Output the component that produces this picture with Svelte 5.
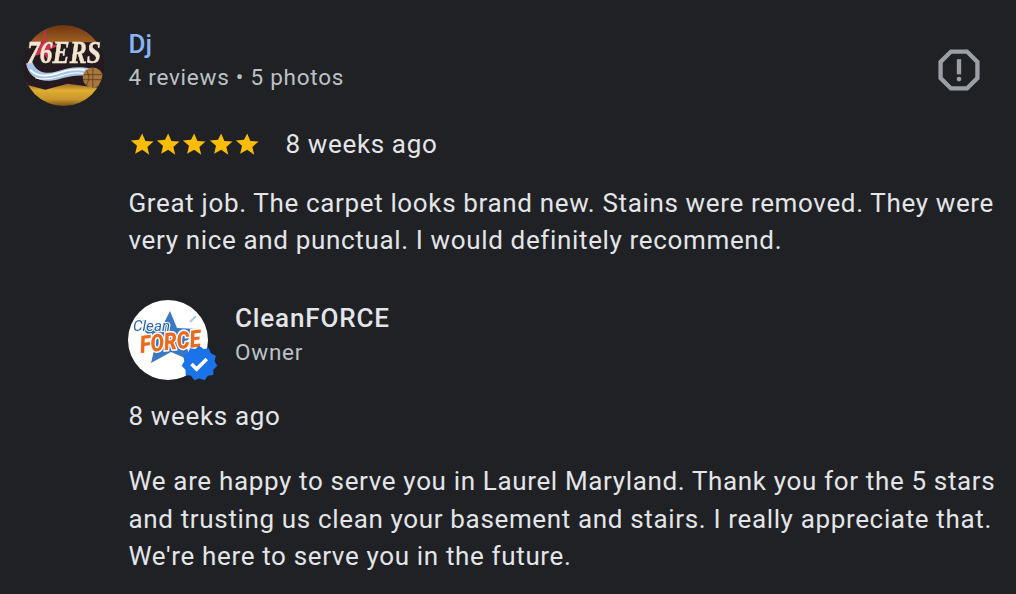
<script>
	let stars = [0, 1, 2, 3, 4];
	const starPath = "M12 2.2l2.9 6.8 7.4.6-5.6 4.9 1.7 7.2L12 17l-6.4 3.7 1.7-7.2-5.6-4.9 7.4-.6z";
</script>

<div class="review">
	<svg class="avatar" viewBox="0 0 80 80">
		<defs>
			<clipPath id="round"><circle cx="40" cy="40" r="40" /></clipPath>
			<linearGradient id="top" x1="0" y1="0" x2="0" y2="1">
				<stop offset="0" stop-color="#6e3512" />
				<stop offset="1" stop-color="#b5702a" />
			</linearGradient>
			<linearGradient id="low" x1="0" y1="0" x2="0" y2="1">
				<stop offset="0" stop-color="#6b3d1c" />
				<stop offset="0.4" stop-color="#e0ae30" />
				<stop offset="0.75" stop-color="#c8962c" />
				<stop offset="1" stop-color="#7c4f1a" />
			</linearGradient>
			<linearGradient id="orange" x1="0" y1="0" x2="0" y2="1">
				<stop offset="0" stop-color="#f2922e" />
				<stop offset="1" stop-color="#e2551c" />
			</linearGradient>
		</defs>
		<g clip-path="url(#round)">
			<rect width="80" height="24" fill="url(#top)" />
			<rect y="54" width="80" height="26" fill="url(#low)" />
			<path d="M0 17h80v33l-6 12-30-4-22 6-22-6z" fill="#241a20" />
			<path d="M3 38c2 12 12 18 24 17s24-9 44-3l-4-9c-14-3-24 0-34 3s-20 1-24-10z" fill="#a9c6e6" />
			<path d="M7 44c6 7 16 7 26 4s20-6 32-3" stroke="#fff" stroke-width="1.6" fill="none" />
			<path d="M12 52c10 3 20 0 30-3s16-2 22 0" stroke="#fff" stroke-width="1" fill="none" />
			<circle cx="69" cy="52" r="10" fill="#a8773e" />
			<path d="M60 49h18M59 54h20M69 42v20M62 44c4 5 4 11 0 16" stroke="#5c3a1a" stroke-width="0.8" fill="none" />
			<path d="M22 3l1 15 13 2-11 5 2 13-7-10-13 4 9-9-7-9 10 4z" fill="#c8324f" />
		</g>
		<text x="4" y="38" class="sixers" textLength="73" lengthAdjust="spacingAndGlyphs">76ERS</text>
	</svg>

	<div class="content">
		<div class="head">
			<div>
				<div class="name">Dj</div>
				<div class="meta">4 reviews • 5 photos</div>
			</div>
			<svg class="flag" viewBox="0 0 24 24">
				<path d="M8.300 3.500h7.400l4.800 4.800v7.400l-4.800 4.800H8.300l-4.800-4.800V8.300z" fill="none" stroke="#9aa0a6" stroke-width="2" />
				<rect x="11" y="7" width="2" height="7" fill="#9aa0a6" />
				<circle cx="12" cy="16.200" r="1.100" fill="#9aa0a6" />
			</svg>
		</div>

		<div class="rating">
			<div class="stars">
				{#each stars as s}
					<svg class="star" viewBox="0 0 24 24"><path d={starPath} fill="#fbbc04" /></svg>
				{/each}
			</div>
			<span>8 weeks ago</span>
		</div>

		<p class="text">Great job. The carpet looks brand new. Stains were removed. They were very nice and punctual. I would definitely recommend.</p>

		<div class="owner">
			<div class="logo-wrap">
				<svg class="logo" viewBox="0 0 80 80">
					<circle cx="40" cy="40" r="40" fill="#fff" />
					<path d="M42 11l7 17 21 1-13 14 7 18-21-9-20 11 5-21-14-13 20-2z" fill="#3b78c2" />
					<path d="M20 26l-6-6M62 22l6-6M68 44l5 4" stroke="#a9c8ea" stroke-width="2" />
					<text x="5" y="31" class="clean" textLength="37" lengthAdjust="spacingAndGlyphs">Clean</text>
					<g transform="rotate(-6 40 45)">
						<text x="12" y="50" class="force-edge" textLength="61" lengthAdjust="spacingAndGlyphs">FORCE</text>
						<text x="12" y="50" class="force" textLength="61" lengthAdjust="spacingAndGlyphs">FORCE</text>
					</g>
				</svg>
				<svg class="badge" viewBox="0 0 24 24">
					<path d="M12 .8l3 2.200 3.600-.5 1.300 3.400 3.300 1.600-.8 3.600 1.800 3.100-2.600 2.600-.1 3.600-3.600.5-2.200 3-3.400-1.200-3.400 1.200-2.200-3-3.600-.5-.1-3.600L.4 14.200l1.800-3.100-.8-3.600 3.300-1.600 1.300-3.400 3.600.5z" fill="#1a73e8" transform="translate(0 -1)" />
					<path d="M7 12l3.400 3.400L17.200 8.600" fill="none" stroke="#fff" stroke-width="2.400" />
				</svg>
			</div>
			<div>
				<div class="owner-name">CleanFORCE</div>
				<div class="role">Owner</div>
			</div>
		</div>

		<div class="when">8 weeks ago</div>

		<p class="text reply">We are happy to serve you in Laurel Maryland. Thank you for the 5 stars and trusting us clean your basement and stairs. I really appreciate that. We're here to serve you in the future.</p>
	</div>
</div>

<style>
	:global(body) {
		margin: 0;
		background: #202124;
		overflow: hidden;
	}
	.review {
		display: flex;
		gap: 24.5px;
		height: 594px;
		padding: 25px 0 0 23px;
		box-sizing: border-box;
		font-family: Roboto, sans-serif;
		color: #e3e5e8;
	}
	.avatar {
		width: 81px;
		height: 81px;
		flex: none;
		overflow: visible;
		filter: blur(0.5px);
	}
	.content {
		width: 870px;
	}
	.head {
		display: flex;
		justify-content: space-between;
		align-items: flex-start;
		height: 80px;
	}
	.name {
		font-size: 26px;
		font-weight: 500;
		line-height: 39px;
		color: #8ab4f8;
	}
	.meta {
		font-size: 22.5px;
		letter-spacing: 0.75px;
		line-height: 26px;
		color: #bdc1c6;
	}
	.flag {
		width: 52px;
		height: 52px;
		margin: 19px 14px 0 0;
	}
	.rating {
		display: flex;
		align-items: center;
		gap: 25px;
		height: 38px;
		margin-top: 20px;
		font-size: 26px;
		letter-spacing: 0.65px;
	}
	.stars {
		display: flex;
	}
	.star {
		width: 26.4px;
		height: 26.4px;
	}
	.text {
		margin: 21.7px 0 0;
		font-size: 26px;
		line-height: 37.5px;
		letter-spacing: 0.65px;
	}
	.owner {
		display: flex;
		gap: 27px;
		margin-top: 40px;
	}
	.logo-wrap {
		position: relative;
		width: 80px;
		height: 80px;
		margin-left: -0.5px;
	}
	.logo {
		width: 80px;
		height: 80px;
		display: block;
		overflow: visible;
		filter: blur(0.4px);
	}
	.badge {
		position: absolute;
		right: -9px;
		bottom: -2px;
		width: 36px;
		height: 36px;
	}
	.owner-name {
		font-size: 26px;
		font-weight: 500;
		line-height: 37px;
		letter-spacing: 0.85px;
	}
	.role {
		font-size: 22.5px;
		letter-spacing: 0.75px;
		line-height: 31px;
		color: #bdc1c6;
	}
	.when {
		font-size: 26px;
		letter-spacing: 0.65px;
		line-height: 38px;
		margin-top: 17.3px;
	}
	.reply {
		margin-top: 28.3px;
	}
	.sixers {
		font-family: "Liberation Serif", serif;
		font-weight: 700;
		font-style: italic;
		font-size: 32px;
		fill: #f2e6cf;
		stroke: #f2e6cf;
		stroke-width: 0.5px;
	}
	.clean {
		font-family: Roboto, sans-serif;
		font-style: italic;
		font-size: 14px;
		fill: #2a62ad;
		paint-order: stroke;
		stroke: #fff;
		stroke-width: 2px;
	}
	.force {
		font-family: Roboto, sans-serif;
		font-weight: 900;
		font-style: italic;
		font-size: 24px;
		fill: #ea6a1f;
	}
	.force-edge {
		font-family: Roboto, sans-serif;
		font-weight: 900;
		font-style: italic;
		font-size: 24px;
		fill: none;
		stroke: #fff;
		stroke-width: 3px;
	}
</style>
